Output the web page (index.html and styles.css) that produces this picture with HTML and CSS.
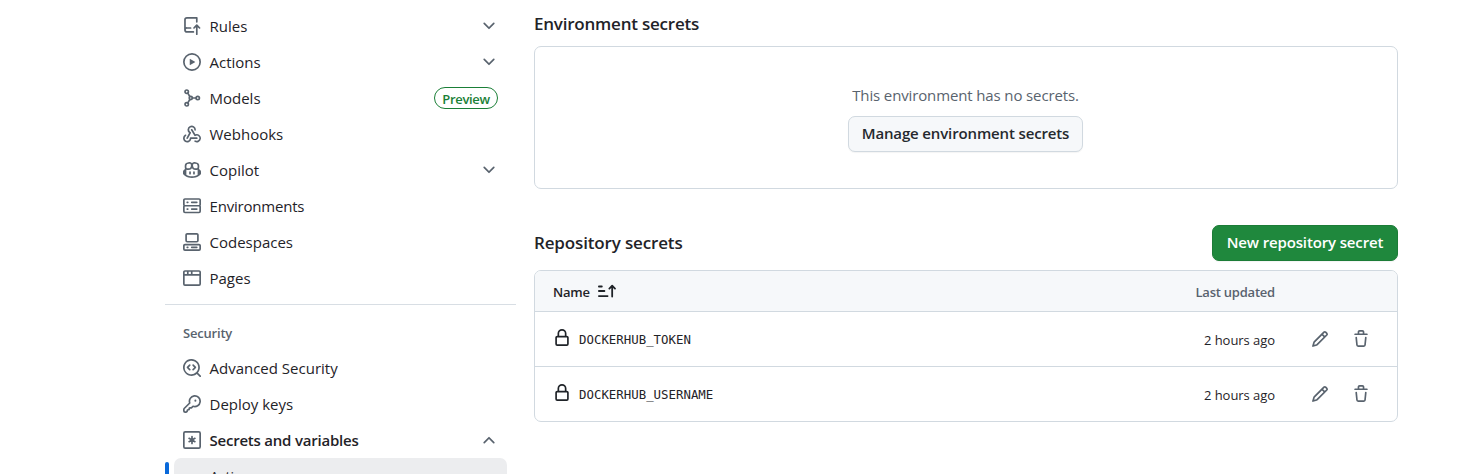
FILE: index.html
```html
<!DOCTYPE html>
<html lang="en">
<head>
<meta charset="utf-8">
<title>Actions secrets</title>
<link rel="stylesheet" href="styles.css">
</head>
<body>
<svg class="sprite" aria-hidden="true">
  <symbol id="chevron" viewBox="0 0 16 16"><path d="M12.78 5.22a.749.749 0 0 1 0 1.06l-4.25 4.25a.749.749 0 0 1-1.06 0L3.22 6.28a.749.749 0 1 1 1.06-1.06L8 8.939l3.72-3.719a.749.749 0 0 1 1.06 0Z"/></symbol>
  <symbol id="lock" viewBox="0 0 16 16"><path d="M4 4a4 4 0 0 1 8 0v2h.25c.966 0 1.75.784 1.75 1.75v5.5A1.75 1.75 0 0 1 12.25 15h-8.5A1.75 1.75 0 0 1 2 13.25v-5.5C2 6.784 2.784 6 3.75 6H4Zm8.25 3.5h-8.5a.25.25 0 0 0-.25.25v5.5c0 .138.112.25.25.25h8.5a.25.25 0 0 0 .25-.25v-5.5a.25.25 0 0 0-.25-.25ZM10.5 6V4a2.5 2.5 0 1 0-5 0v2Z"/></symbol>
  <symbol id="pencil" viewBox="0 0 16 16"><path d="M11.013 1.427a1.75 1.75 0 0 1 2.474 0l1.086 1.086a1.75 1.75 0 0 1 0 2.474l-8.61 8.61c-.21.21-.47.364-.756.445l-3.251.93a.75.75 0 0 1-.927-.928l.929-3.25c.081-.286.235-.547.445-.758l8.61-8.61Zm.176 4.823L9.75 4.81l-6.286 6.287a.253.253 0 0 0-.064.108l-.558 1.953 1.953-.558a.253.253 0 0 0 .108-.064Zm1.238-3.763a.25.25 0 0 0-.354 0L10.811 3.75l1.439 1.44 1.263-1.263a.25.25 0 0 0 0-.354Z"/></symbol>
  <symbol id="trash" viewBox="0 0 16 16"><path d="M11 1.75V3h2.25a.75.75 0 0 1 0 1.5H2.75a.75.75 0 0 1 0-1.5H5V1.75C5 .784 5.784 0 6.75 0h2.5C10.216 0 11 .784 11 1.75ZM4.496 6.675l.66 6.6a.25.25 0 0 0 .249.225h5.19a.25.25 0 0 0 .249-.225l.66-6.6a.75.75 0 0 1 1.492.149l-.66 6.6A1.748 1.748 0 0 1 10.595 15h-5.19a1.75 1.75 0 0 1-1.741-1.575l-.66-6.6a.75.75 0 1 1 1.492-.15ZM6.5 1.75V3h3V1.75a.25.25 0 0 0-.25-.25h-2.5a.25.25 0 0 0-.25.25Z"/></symbol>
</svg>
<div class="page">
  <nav class="sidebar">
    <a class="item"><svg class="icon" viewBox="0 0 16 16"><path d="M1 2.5A2.5 2.5 0 0 1 3.5 0h8.75a.75.75 0 0 1 .75.75v3.5a.75.75 0 0 1-1.5 0V1.5h-8a1 1 0 0 0-1 1v6.708A2.493 2.493 0 0 1 3.5 9h3.25a.75.75 0 0 1 0 1.5H3.5a1 1 0 0 0 0 2h5.75a.75.75 0 0 1 0 1.5H3.5A2.5 2.5 0 0 1 1 11.5Zm13.23 7.79h-.001l-1.224-1.224v6.184a.75.75 0 0 1-1.5 0V9.066L10.28 10.29a.75.75 0 0 1-1.06-1.061l2.505-2.504a.75.75 0 0 1 1.06 0L15.29 9.23a.751.751 0 0 1-.018 1.042.751.751 0 0 1-1.042.018Z"/></svg><span class="label">Rules</span><svg class="icon chev"><use href="#chevron"/></svg></a>
    <a class="item"><svg class="icon" viewBox="0 0 16 16"><path d="M8 0a8 8 0 1 1 0 16A8 8 0 0 1 8 0ZM1.5 8a6.5 6.5 0 1 0 13 0 6.5 6.5 0 0 0-13 0Zm4.879-2.773 4.264 2.559a.25.25 0 0 1 0 .428l-4.264 2.559A.25.25 0 0 1 6 10.559V5.442a.25.25 0 0 1 .379-.215Z"/></svg><span class="label">Actions</span><svg class="icon chev"><use href="#chevron"/></svg></a>
    <a class="item"><svg class="icon line" viewBox="0 0 16 16"><circle cx="3.3" cy="2.4" r="1.5"/><circle cx="3.3" cy="13.6" r="1.5"/><circle cx="6.9" cy="8" r="1.4"/><circle cx="13.1" cy="8" r="1.5"/><path d="M4.2 3.7 6.1 6.7M4.2 12.3 6.1 9.3M8.3 8h3.3"/></svg><span class="label">Models</span><span class="badge">Preview</span></a>
    <a class="item"><svg class="icon" viewBox="0 0 16 16"><path d="M5.5 4.25a2.25 2.25 0 0 1 4.5 0 .75.75 0 0 0 1.5 0 3.75 3.75 0 1 0-6.14 2.889l-2.272 4.258a.75.75 0 0 0 1.324.706L7 7.25a.75.75 0 0 0-.309-1.015A2.25 2.25 0 0 1 5.5 4.25Z"/><path d="M7.364 3.607a.75.75 0 0 1 1.03.257l2.608 4.349a3.75 3.75 0 1 1-.628 6.785.75.75 0 0 1 .752-1.299 2.25 2.25 0 1 0-.033-3.88.75.75 0 0 1-1.03-.256L7.107 4.636a.75.75 0 0 1 .257-1.03Z"/><path d="M2.9 8.776A.75.75 0 0 1 2.625 9.8 2.25 2.25 0 1 0 6 11.75a.75.75 0 0 1 .75-.751h5.5a.75.75 0 0 1 0 1.5H7.425a3.751 3.751 0 1 1-5.55-3.998.75.75 0 0 1 1.024.274Z"/></svg><span class="label">Webhooks</span></a>
    <a class="item"><svg class="icon" viewBox="0 0 16 16"><path d="M7.998 15.035c-4.562 0-7.873-2.914-7.998-3.749V9.338c.085-.628.677-1.686 1.588-2.065.013-.07.024-.143.036-.218.029-.183.06-.384.126-.612-.201-.508-.254-1.084-.254-1.656 0-.87.128-1.769.693-2.484.579-.733 1.494-1.124 2.724-1.261 1.206-.134 2.262.034 2.944.765.05.053.096.108.139.165.044-.057.094-.112.143-.165.682-.731 1.738-.899 2.944-.765 1.23.137 2.145.528 2.724 1.261.566.715.693 1.614.693 2.484 0 .572-.053 1.148-.254 1.656.066.228.098.429.126.612.012.076.024.148.037.218.924.385 1.522 1.471 1.591 2.095v1.872c0 .766-3.351 3.795-8.002 3.795Zm0-1.485c2.28 0 4.584-1.11 5.002-1.433V7.862l-.023-.116c-.49.21-1.075.291-1.727.291-1.146 0-2.059-.327-2.71-.991A3.222 3.222 0 0 1 8 6.303a3.24 3.24 0 0 1-.544.743c-.65.664-1.563.991-2.71.991-.652 0-1.236-.081-1.727-.291l-.023.116v4.255c.419.323 2.722 1.433 5.002 1.433ZM6.762 2.83c-.193-.206-.637-.413-1.682-.297-1.019.113-1.479.404-1.713.7-.247.312-.369.789-.369 1.554 0 .793.129 1.171.308 1.371.162.181.519.379 1.442.379.853 0 1.339-.235 1.638-.54.315-.322.527-.827.617-1.553.117-.935-.037-1.395-.241-1.614Zm4.155-.297c-1.044-.116-1.488.091-1.681.297-.204.219-.359.679-.242 1.614.091.726.303 1.231.618 1.553.299.305.784.54 1.638.54.922 0 1.28-.198 1.442-.379.179-.2.308-.578.308-1.371 0-.765-.123-1.242-.37-1.554-.233-.296-.693-.587-1.713-.7Z"/><path d="M6.25 9.037a.75.75 0 0 1 .75.75v1.501a.75.75 0 0 1-1.5 0V9.787a.75.75 0 0 1 .75-.75Zm4.25.75v1.501a.75.75 0 0 1-1.5 0V9.787a.75.75 0 0 1 1.5 0Z"/></svg><span class="label">Copilot</span><svg class="icon chev"><use href="#chevron"/></svg></a>
    <a class="item"><svg class="icon" viewBox="0 0 16 16"><path d="M1.75 1h12.5c.966 0 1.75.784 1.75 1.75v4c0 .372-.116.717-.314 1 .198.283.314.628.314 1v4a1.75 1.75 0 0 1-1.75 1.75H1.75A1.75 1.75 0 0 1 0 12.75v-4c0-.358.109-.707.314-1a1.739 1.739 0 0 1-.314-1v-4C0 1.784.784 1 1.75 1ZM1.5 2.75v4c0 .138.112.25.25.25h12.5a.25.25 0 0 0 .25-.25v-4a.25.25 0 0 0-.25-.25H1.75a.25.25 0 0 0-.25.25Zm.25 5.75a.25.25 0 0 0-.25.25v4c0 .138.112.25.25.25h12.5a.25.25 0 0 0 .25-.25v-4a.25.25 0 0 0-.25-.25ZM7 4.75A.75.75 0 0 1 7.75 4h4.5a.75.75 0 0 1 0 1.5h-4.5A.75.75 0 0 1 7 4.75ZM7.75 10h4.5a.75.75 0 0 1 0 1.5h-4.5a.75.75 0 0 1 0-1.5ZM3 4.75A.75.75 0 0 1 3.75 4h.5a.75.75 0 0 1 0 1.5h-.5A.75.75 0 0 1 3 4.75ZM3.75 10h.5a.75.75 0 0 1 0 1.5h-.5a.75.75 0 0 1 0-1.5Z"/></svg><span class="label tight">Environments</span></a>
    <a class="item"><svg class="icon" viewBox="0 0 16 16"><path d="M0 11.25c0-.966.784-1.75 1.75-1.75h12.5c.966 0 1.75.784 1.75 1.75v3A1.75 1.75 0 0 1 14.25 16H1.75A1.75 1.75 0 0 1 0 14.25Zm2-9.5C2 .784 2.784 0 3.75 0h8.5C13.216 0 14 .784 14 1.75v5a1.75 1.75 0 0 1-1.75 1.75h-8.5A1.75 1.75 0 0 1 2 6.75Zm1.75-.25a.25.25 0 0 0-.25.25v5c0 .138.112.25.25.25h8.5a.25.25 0 0 0 .25-.25v-5a.25.25 0 0 0-.25-.25Zm-2 9.5a.25.25 0 0 0-.25.25v3c0 .138.112.25.25.25h12.5a.25.25 0 0 0 .25-.25v-3a.25.25 0 0 0-.25-.25Z"/><path d="M7 12.75a.75.75 0 0 1 .75-.75h4.5a.75.75 0 0 1 0 1.5h-4.5a.75.75 0 0 1-.75-.75Zm-4 0a.75.75 0 0 1 .75-.75h.5a.75.75 0 0 1 0 1.5h-.5a.75.75 0 0 1-.75-.75Z"/></svg><span class="label">Codespaces</span></a>
    <a class="item"><svg class="icon" viewBox="0 0 16 16"><path d="M0 2.75C0 1.784.784 1 1.75 1h12.5c.966 0 1.75.784 1.75 1.75v10.5A1.75 1.75 0 0 1 14.25 15H1.75A1.75 1.75 0 0 1 0 13.25ZM14.5 6h-13v7.25c0 .138.112.25.25.25h12.5a.25.25 0 0 0 .25-.25Zm-6-3.5v2h6V2.75a.25.25 0 0 0-.25-.25ZM5 2.5v2h2v-2Zm-3.25 0a.25.25 0 0 0-.25.25V4.5h2v-2Z"/></svg><span class="label">Pages</span></a>
    <div class="divider"></div>
    <h3 class="group">Security</h3>
    <a class="item"><svg class="icon" viewBox="0 0 16 16"><path d="M8.47 4.97a.75.75 0 0 0 0 1.06L9.94 7.5 8.47 8.97a.75.75 0 1 0 1.06 1.06l2-2a.75.75 0 0 0 0-1.06l-2-2a.75.75 0 0 0-1.06 0ZM6.53 6.03a.75.75 0 0 0-1.06-1.06l-2 2a.75.75 0 0 0 0 1.06l2 2a.75.75 0 1 0 1.06-1.06L5.06 7.5l1.47-1.47Z"/><path d="M12.246 13.307a7.501 7.501 0 1 1 1.06-1.06l2.474 2.473a.75.75 0 1 1-1.06 1.06l-2.474-2.473ZM1.5 7.5a6.002 6.002 0 0 0 3.608 5.504 6.002 6.002 0 0 0 6.486-1.117.748.748 0 0 1 .292-.293A6 6 0 1 0 1.5 7.5Z"/></svg><span class="label">Advanced Security</span></a>
    <a class="item"><svg class="icon line" viewBox="0 0 16 16"><path d="M6 7.1A4.75 4.75 0 1 1 8.9 10L7.7 11.2q-.3.3-.7.3H6.1q-.6 0-.6.6v.5q0 .5-.5.5h-.6q-.6 0-.6.6v.4q0 .3-.2.5l-.4.4q-.2.2-.5.2H1.9A1.15 1.15 0 0 1 .75 14.1v-1.4q0-.4.3-.7Z" stroke-linejoin="round"/><circle class="dot" cx="11" cy="5" r=".9"/></svg><span class="label">Deploy keys</span></a>
    <a class="item open"><svg class="icon line" viewBox="0 0 16 16"><rect x=".75" y=".75" width="14.5" height="14.5" rx="1.2"/><path d="M8 4.9v6.2M5.4 6.5l5.2 3M10.6 6.5 5.4 9.5"/></svg><span class="label">Secrets and variables</span><svg class="icon chev up"><use href="#chevron"/></svg></a>
    <a class="subitem"><span class="marker"></span><span class="sublabel">Actions</span></a>
  </nav>
  <main class="content">
    <h2 class="title env-title">Environment secrets</h2>
    <section class="blank">
      <p class="blank-text">This environment has no secrets.</p>
      <button class="btn">Manage environment secrets</button>
    </section>
    <div class="repo-head">
      <h2 class="title repo-title">Repository secrets</h2>
      <button class="btn primary">New repository secret</button>
    </div>
    <section class="table">
      <div class="row head">
        <span class="name">Name</span>
        <svg class="icon sort" viewBox="0 0 16 16"><path d="M.8 3.1h2.6M.8 7.1h4.9M.8 11.6h7.7M12.6 12V3M10.1 4.9l2.5-2.5 2.5 2.5"/></svg>
        <span class="updated">Last updated</span>
      </div>
      <div class="row"><svg class="icon lock"><use href="#lock"/></svg><code class="secret">DOCKERHUB_TOKEN</code><span class="time">2 hours ago</span><svg class="icon edit"><use href="#pencil"/></svg><svg class="icon trash"><use href="#trash"/></svg></div>
      <div class="row"><svg class="icon lock"><use href="#lock"/></svg><code class="secret">DOCKERHUB_USERNAME</code><span class="time">2 hours ago</span><svg class="icon edit"><use href="#pencil"/></svg><svg class="icon trash"><use href="#trash"/></svg></div>
    </section>
  </main>
</div>
</body>
</html>
```
FILE: styles.css
```css
* { box-sizing: border-box; }
body { margin: 0; background: #fff; color: #1f2328; font: 15px/24px "Open Sans", "Noto Sans", sans-serif; height: 474px; overflow: hidden; }
.sprite { display: none; }
h2, h3, p { margin: 0; }
.page { display: flex; height: 474px; overflow: hidden; padding-left: 165px; }
.sidebar { width: 351px; flex: none; padding-top: 8px; }
.item { display: flex; align-items: center; height: 36px; padding: 0 18px; }
.icon { width: 18px; height: 18px; flex: none; fill: #59636e; }
.line { fill: none; stroke: #59636e; stroke-width: 1.5; stroke-linecap: round; }
.dot { fill: #59636e; stroke: none; }
.label { margin-left: 8.5px; white-space: nowrap; }
.tight { letter-spacing: -.2px; }
.chev { margin-left: auto; }
.up { transform: rotate(180deg); }
.badge { margin-left: auto; width: 64px; height: 22px; border: 1px solid #1a7f37; border-radius: 11px; text-align: center; color: #1a7f37; font-size: 13px; line-height: 22px; font-weight: 600; letter-spacing: -.35px; }
.divider { height: 1px; background: #d8dee4; margin: 8px 0 16px; }
.group { padding-left: 18px; height: 29px; font-size: 13px; line-height: 25px; font-weight: 600; letter-spacing: -.2px; color: #59636e; }
.open { font-weight: 600; letter-spacing: -.22px; }
.subitem { display: flex; margin-right: 9px; height: 36px; }
.marker { width: 4px; height: 27px; margin: 4px 5px 0 0; border-radius: 4px; background: #0969da; }
.sublabel { flex: 1; padding-left: 36px; background: #ecedef; border-radius: 7px; font-size: 14px; line-height: 38px; }
.content { width: 864px; margin-left: 18px; flex: none; }
.title { font-size: 17px; line-height: 26px; font-weight: 600; white-space: nowrap; letter-spacing: -.22px; }
.repo-title { letter-spacing: -.15px; }
.env-title { padding-top: 11px; height: 46px; }
.blank { height: 143px; border: 1px solid #d1d9e0; border-radius: 7px; padding: 35px 1px 0 0; display: flex; flex-direction: column; align-items: center; }
.blank-text { height: 34px; line-height: 27px; color: #59636e; letter-spacing: -.13px; }
.btn { height: 36px; width: 235px; padding: 0 0 2px; border: 1px solid #d1d9e0; border-radius: 7px; background: #f6f8fa; color: #25292e; font: 600 15px/32px "Open Sans", sans-serif; letter-spacing: -.14px; white-space: nowrap; box-shadow: 0 1px 1px rgba(31,35,40,.05); }
.primary { width: 186px; background: #1f883d; border-color: #1c7c37; color: #fff; }
.repo-head { display: flex; justify-content: space-between; align-items: center; margin-top: 36px; height: 36px; }
.table { margin-top: 9px; border: 1px solid #d1d9e0; border-radius: 7px; overflow: hidden; }
.row { display: flex; align-items: center; height: 55px; padding: 0 27px 2px 18px; border-top: 1px solid #d1d9e0; }
.head { height: 40px; border-top: 0; background: #f6f8fa; padding: 2px 122px 0 18px; font-size: 13px; font-weight: 600; letter-spacing: -.22px; }
.sort { margin: 0 0 0 8px; fill: none; stroke: #1f2328; stroke-width: 1.6; stroke-linecap: round; stroke-linejoin: round; }
.updated { margin-left: auto; color: #59636e; }
.lock { fill: #1f2328; }
.secret { margin-left: 8px; font: 12.4px/20px "DejaVu Sans Mono", monospace; padding-top: 3px; }
.time { margin-left: auto; font-size: 13px; padding-top: 4px; letter-spacing: -.05px; }
.edit { margin: 2px 0 0 36px; }
.trash { margin: 2px 0 0 23px; }
```
